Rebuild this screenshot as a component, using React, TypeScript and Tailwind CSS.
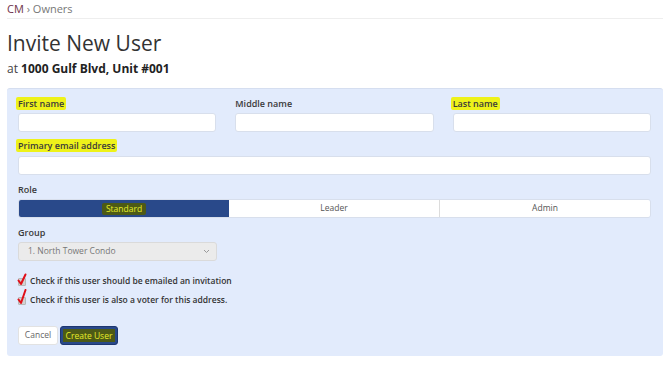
import React from 'react'

const font = { fontFamily: '"Open Sans", "Liberation Sans", sans-serif' }

function Label({ children, mark }: { children: React.ReactNode; mark?: boolean }) {
  return (
    <div className="h-[13px] flex items-center">
      <span
        className={
          'text-[9px] font-semibold text-[#3a3a3a] leading-[13px] ' +
          (mark ? 'bg-[#eef21a] px-[2px] -ml-[2px] rounded-[2px]' : '')
        }
      >
        {children}
      </span>
    </div>
  )
}

function TextInput() {
  return <div className="h-[19px] bg-white rounded-[3px] border border-[#d8dfec]" />
}

function CheckRow({ text, big }: { text: string; big?: boolean }) {
  return (
    <div className="h-[14px] flex items-center gap-[4px]">
      <div className="relative w-[8px] h-[8px] mt-[2px]">
        <div className="absolute inset-0 bg-[#d2d2d2] rounded-[1px] border border-[#b8b8b8]" />
        <svg
          className="absolute"
          style={{ left: -1, top: big ? -8 : -5 }}
          width="10"
          height={big ? 16 : 13}
          viewBox={big ? '0 0 10 16' : '0 0 10 13'}
        >
          {big ? (
            <path d="M1.5 10.5 L4 14 L8.5 1" stroke="#e0101a" strokeWidth="2" fill="none" strokeLinecap="round" strokeLinejoin="round" />
          ) : (
            <path d="M1.5 7.5 L4 11 L8.5 1.5" stroke="#e0101a" strokeWidth="2" fill="none" strokeLinecap="round" strokeLinejoin="round" />
          )}
        </svg>
      </div>
      <span className="text-[8.5px] font-semibold text-[#333]">{text}</span>
    </div>
  )
}

export default function App() {
  return (
    <div className="w-[670px] h-[365px] bg-white px-[7px] overflow-hidden" style={font}>
      <div className="h-[19px] border-b border-[#eeeeee] pt-[1px] text-[11px] leading-[16px]">
        <span className="text-[#6e3148]">CM</span>
        <span className="text-[#777]"> › Owners</span>
      </div>

      <h1 className="mt-[11px] text-[21px] leading-[27px] text-[#333] font-normal">Invite New User</h1>
      <div className="mt-[4px] text-[12px] leading-[16px] text-[#444]">
        at <span className="font-bold text-[#222]">1000 Gulf Blvd, Unit #001</span>
      </div>

      <div className="mt-[11px] bg-[#e2ebfc] rounded-[3px] border-t border-[#d5def0] pl-[11px] pr-[12px] pt-[8px] pb-[11px]">
        <div className="grid grid-cols-3 gap-x-[19px]">
          <div>
            <Label mark>First name</Label>
            <div className="mt-[3px]"><TextInput /></div>
          </div>
          <div>
            <Label>Middle name</Label>
            <div className="mt-[3px]"><TextInput /></div>
          </div>
          <div>
            <Label mark>Last name</Label>
            <div className="mt-[3px]"><TextInput /></div>
          </div>
        </div>

        <div className="mt-[7px]">
          <Label mark>Primary email address</Label>
          <div className="mt-[4px]"><TextInput /></div>
        </div>

        <div className="mt-[8px]">
          <Label>Role</Label>
          <div className="mt-[3px] h-[19px] flex rounded-[3px] overflow-hidden border border-[#d8dfec] text-[8.5px]">
            <div className="w-[210px] bg-[#29498a] flex items-center justify-center">
              <span className="bg-[#4d5a16] text-[#e6ec2a] px-[4px] leading-[12px] rounded-[2px]">Standard</span>
            </div>
            <div className="flex-1 bg-white flex items-center justify-center text-[#555] border-r border-[#dcdcdc]">Leader</div>
            <div className="flex-1 bg-white flex items-center justify-center text-[#555]">Admin</div>
          </div>
        </div>

        <div className="mt-[8px]">
          <Label>Group</Label>
          <div className="mt-[3px] w-[199px] h-[19px] bg-[#ebebeb] border border-[#dadada] rounded-[3px] flex items-center justify-between pl-[9px] pr-[6px]">
            <span className="text-[8.5px] text-[#777]">1. North Tower Condo</span>
            <svg width="7" height="5" viewBox="0 0 7 5">
              <path d="M1 1 L3.5 3.5 L6 1" stroke="#999" strokeWidth="1" fill="none" />
            </svg>
          </div>
        </div>

        <div className="mt-[13px]">
          <CheckRow text="Check if this user should be emailed an invitation" />
        </div>
        <div className="mt-[5px]">
          <CheckRow big text="Check if this user is also a voter for this address." />
        </div>

        <div className="mt-[19px] flex gap-[2px]">
          <div className="w-[40px] h-[19px] bg-white rounded-[3px] border border-[#e2e2e2] flex items-center justify-center text-[8.5px] text-[#666]">
            Cancel
          </div>
          <div className="w-[58px] h-[19px] bg-[#29498a] rounded-[3px] border border-[#1d3670] flex items-center justify-center">
            <span className="bg-[#4d5a16] text-[#e6ec2a] text-[8.5px] leading-[13px] px-[3px]">Create User</span>
          </div>
        </div>
      </div>
    </div>
  )
}
